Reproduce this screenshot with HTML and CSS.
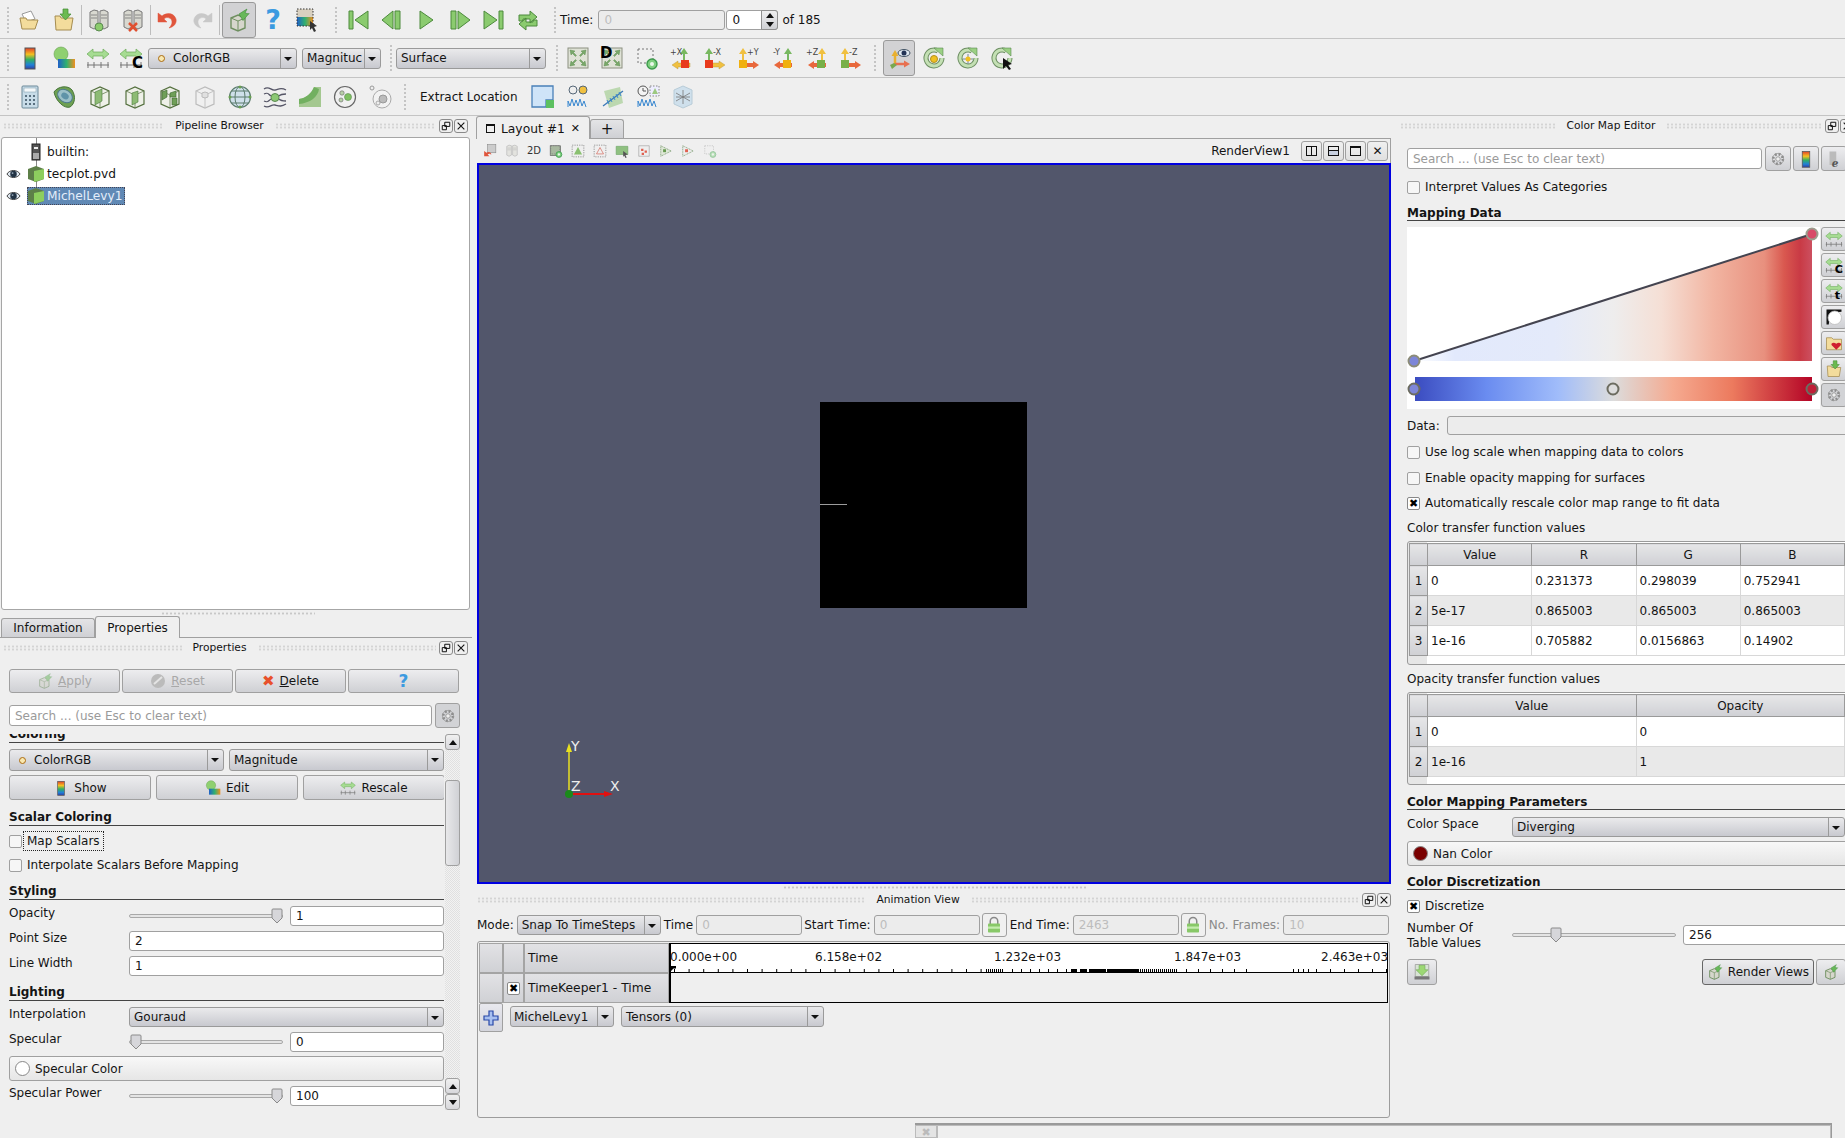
FILE: index.html
```html
<!DOCTYPE html>
<html lang="en">
<head>
    <meta charset="UTF-8">
    <title>ParaView</title>
    <link rel="stylesheet" href="styles.css">
</head>
<body>
<svg class="defs" width="0" height="0">
    <defs>
        <linearGradient id="rainbow" x1="0" y1="0" x2="0" y2="1">
            <stop offset="0" stop-color="#e0402a"/><stop offset=".3" stop-color="#f5c020"/><stop offset=".55" stop-color="#30b060"/><stop offset=".8" stop-color="#2080d8"/><stop offset="1" stop-color="#3040a0"/>
        </linearGradient>
        <linearGradient id="hrainbow" x1="0" y1="0" x2="1" y2="0">
            <stop offset="0" stop-color="#2060c8"/><stop offset=".5" stop-color="#30b070"/><stop offset="1" stop-color="#f09020"/>
        </linearGradient>
        <linearGradient id="opfill" x1="0" y1="0" x2="1" y2="0">
            <stop offset="0" stop-color="#e0e8fc" stop-opacity="0"/><stop offset=".1" stop-color="#e2e9fc"/><stop offset=".35" stop-color="#e4eafa"/><stop offset=".5" stop-color="#eeeded"/><stop offset=".62" stop-color="#f5dfd5"/><stop offset=".75" stop-color="#f2b5a2"/><stop offset=".88" stop-color="#e8907e"/><stop offset=".93" stop-color="#d9584f"/><stop offset=".97" stop-color="#c93a45"/><stop offset="1" stop-color="#cc5060"/>
        </linearGradient>
        <linearGradient id="ctf" x1="0" y1="0" x2="1" y2="0">
            <stop offset="0" stop-color="#3b4cc0"/><stop offset=".18" stop-color="#6a8cf0"/><stop offset=".36" stop-color="#a0bcfa"/><stop offset=".5" stop-color="#dcdcdc"/><stop offset=".65" stop-color="#f5aa90"/><stop offset=".8" stop-color="#ec7a5e"/><stop offset="1" stop-color="#b40426"/>
        </linearGradient>
        <symbol id="folder" viewBox="0 0 24 24"><path d="M4 6l9-3 4 8-9 3z" fill="#fff" stroke="#999"/><path d="M2 10h6l1 2h11l-3 9H4z" fill="#f3dc9c" stroke="#a58c50"/></symbol>
        <symbol id="folder-in" viewBox="0 0 24 24"><path d="M3 8h5l1 2h12l-2 12H4z" fill="#f3dc9c" stroke="#a58c50"/><path d="M11 1h5v5h3l-5.500 6L8 6h3z" fill="#6cba50" stroke="#3f8a30" stroke-width=".7"/></symbol>
        <symbol id="server" viewBox="0 0 24 24"><path d="M3 4l4-2 4 1v16l-4 2-4-2zM13 3l4-1 4 2v15l-4 2-4-2z" fill="#d8d8d0" stroke="#777"/><path d="M4 7h6M4 10h6M14 7h6M14 10h6" stroke="#888"/></symbol>
        <symbol id="undo" viewBox="0 0 24 24"><path d="M2 5v9h9l-3-3c3-3 8-1 8 3 0 2-1 4-3 6 5-1 8-5 7-9-2-6-9-7-14-3z" fill="currentColor" stroke="currentColor" stroke-width=".5"/></symbol>
        <symbol id="render" viewBox="0 0 24 24"><path d="M4 10l7-3 7 3v10l-7 3-7-3z" fill="#d6d6cc" stroke="#6f8f60" stroke-width="1.400"/><path d="M4 10l7 3 7-3M11 13v10" stroke="#6f8f60" fill="none"/><path d="M12 6l8-5-2 4 4 1v-.5l-6 7z" fill="#68b85a" stroke="#3c8a38" stroke-width=".6"/></symbol>
        <symbol id="pick" viewBox="0 0 24 24"><rect x="2" y="1" width="16" height="8" fill="#d8d0c0"/><rect x="2" y="9" width="16" height="9" fill="url(#hrainbow)"/><rect x="2" y="1" width="16" height="17" fill="none" stroke="#333" stroke-dasharray="1.500 1.500"/><path d="M15 13l7 5-3 1 2 4-2 1-2-4-2 2z" fill="#333"/></symbol>
        <symbol id="first" viewBox="0 0 24 24"><path d="M3 3h4v18H3zM22 3v18L9 12z" fill="#8bcb6f" stroke="#4c8a3c"/></symbol>
        <symbol id="prev" viewBox="0 0 24 24"><path d="M15 3h5v18h-5zM13 3v18L2 12z" fill="#8bcb6f" stroke="#4c8a3c"/></symbol>
        <symbol id="play" viewBox="0 0 24 24"><path d="M6 3v18l13-9z" fill="#8bcb6f" stroke="#4c8a3c"/></symbol>
        <symbol id="next" viewBox="0 0 24 24"><path d="M3 3h5v18H3zM10 3v18l12-9z" fill="#8bcb6f" stroke="#4c8a3c"/></symbol>
        <symbol id="last" viewBox="0 0 24 24"><path d="M21 3h-4v18h4zM2 3v18l13-9z" fill="#8bcb6f" stroke="#4c8a3c"/></symbol>
        <symbol id="loop" viewBox="0 0 24 24"><path d="M3 13V7h11V3l7 6-7 6v-4H7v2zM21 12v6H10v4l-7-6 7-6v4h7v-2z" fill="#8bcb6f" stroke="#4c8a3c"/></symbol>
        <symbol id="legend" viewBox="0 0 24 24"><rect x="7" y="2" width="10" height="21" fill="url(#rainbow)" stroke="#555"/></symbol>
        <symbol id="edit" viewBox="0 0 24 24"><circle cx="9" cy="8" r="7" fill="#8fd070" stroke="#66a050" stroke-width=".6"/><rect x="6" y="13" width="17" height="9" fill="url(#hrainbow)"/></symbol>
        <symbol id="rescale" viewBox="0 0 24 24"><path d="M1 8l6-5v3h10V3l6 5-6 5v-3H7v3z" fill="#a6dc92" stroke="#6aaa58" stroke-width=".7"/><path d="M1 19h22M2 16v6M8 16v6M15 16v6M22 16v6" stroke="#777" fill="none"/></symbol>
        <symbol id="reset" viewBox="0 0 24 24"><rect x="2" y="2" width="20" height="20" fill="#dfe2d6" stroke="#8c9080"/><path d="M4 4l5 1-1.500 1.500 3 3-1 1-3-3L5 9zM20 4l-1 5-1.500-1.500-3 3-1-1 3-3L15 5zM4 20l1-5 1.500 1.500 3-3 1 1-3 3L9 19zM20 20l-5-1 1.500-1.500-3-3 1-1 3 3L19 15z" fill="#78a868" stroke="#57864a" stroke-width=".4"/></symbol>
        <symbol id="zoombox" viewBox="0 0 24 24"><path d="M3 3h15v14H3z" fill="none" stroke="#777" stroke-dasharray="2 2"/><circle cx="17" cy="18" r="5" fill="#7fd07f" stroke="#3c9a4c" stroke-width="1.400"/><circle cx="17" cy="18" r="2" fill="#eaf8ea"/></symbol>
        <symbol id="rotate" viewBox="0 0 24 24"><path d="M20 12a8 8 0 1 1-4-7" fill="none" stroke="#6e8f64" stroke-width="5"/><path d="M20 12a8 8 0 1 1-4-7" fill="none" stroke="#c4e0b4" stroke-width="3"/><path d="M12 2h9v8z" fill="#9bd084" stroke="#5a8a50" stroke-width=".6"/></symbol>
        <symbol id="calc" viewBox="0 0 24 24"><rect x="4" y="1" width="16" height="22" rx="1" fill="#c8dce8" stroke="#6a8898"/><rect x="6" y="3" width="12" height="4" fill="#f4f8fa" stroke="#7a98a8" stroke-width=".5"/><path d="M7 10h2v2H7zM11 10h2v2h-2zM15 10h2v2h-2zM7 14h2v2H7zM11 14h2v2h-2zM15 14h2v2h-2zM7 18h2v2H7zM11 18h2v2h-2zM15 18h2v2h-2z" fill="#5a7080"/></symbol>
        <symbol id="contour" viewBox="0 0 24 24"><path d="M1 7c4-6 14-7 18-2 4 6 3 14-2 17C12 24 3 17 1 7z" fill="#6ea052" stroke="#48763c"/><ellipse cx="12" cy="11" rx="8" ry="6" transform="rotate(35 12 11)" fill="#9cc0c8" stroke="#4e7c8c"/><ellipse cx="12" cy="11" rx="4" ry="3" transform="rotate(35 12 11)" fill="#5f93a8"/></symbol>
        <symbol id="cube" viewBox="0 0 24 24"><path d="M3 6l9-4 9 4v13l-9 4-9-4z" fill="#eef0e8" stroke="#54703e" stroke-width="1.200"/><path d="M3 6l9 4 9-4M12 10v13" fill="none" stroke="#54703e" stroke-width=".7"/></symbol>
        <symbol id="clip" viewBox="0 0 24 24"><use href="#cube"/><path d="M7 7l7-3v12l-7 4z" fill="#8dbb74" stroke="#4a7a3c" stroke-width=".6"/></symbol>
        <symbol id="slice" viewBox="0 0 24 24"><use href="#cube"/><path d="M9 8l6-2v11l-6 3z" fill="#8dbb74" stroke="#4a7a3c" stroke-width=".6"/></symbol>
        <symbol id="thresh" viewBox="0 0 24 24"><use href="#cube"/><path d="M4 7l5-2v7l-5 3zM12 8l6-2v6h-6zM14 13h5v7h-5z" fill="#6f9f58" stroke="#3d6630" stroke-width=".6"/></symbol>
        <symbol id="extract" viewBox="0 0 24 24"><path d="M3 6l9-4 9 4v13l-9 4-9-4z" fill="#f0f0f0" stroke="#bcbcbc" stroke-width="1.200"/><path d="M3 6l9 4 9-4M12 10v13" fill="none" stroke="#c4c4c4"/><path d="M9 8l3-1 3 1v4l-3 1-3-1z" fill="#e0e0e0" stroke="#bbb"/></symbol>
        <symbol id="glyph" viewBox="0 0 24 24"><circle cx="12" cy="12" r="10.500" fill="#cfe0ea" stroke="#5a7a6c" stroke-width="1.200"/><ellipse cx="12" cy="12" rx="5" ry="10.500" fill="none" stroke="#5a7a6c"/><path d="M2 12h20M4 6h16M4 18h16" stroke="#5a7a6c" fill="none"/><circle cx="12" cy="2" r="1.500" fill="#6aa050"/><circle cx="2" cy="12" r="1.500" fill="#6aa050"/><circle cx="22" cy="12" r="1.500" fill="#6aa050"/><circle cx="12" cy="22" r="1.500" fill="#6aa050"/></symbol>
        <symbol id="stream" viewBox="0 0 24 24"><path d="M1 4c5-4 7 2 11 1s6-3 11 0M1 21c5 3 7-2 11-1s6 2 11-1M1 9c4-2 4 0 7 2M16 11c2-2 4-2 7-2M1 16c4 2 4 0 7-2M16 14c2 2 4 2 7 2" fill="none" stroke="#556" stroke-width="1.300"/><circle cx="12" cy="12.500" r="4" fill="#8cc874" stroke="#5a8a50"/></symbol>
        <symbol id="warp" viewBox="0 0 24 24"><path d="M1 14c7-1 12-5 15-12h7v20H1z" fill="#a4c890"/><path d="M1 14c7-1 12-5 15-12l5 2c-1 8-9 14-20 15z" fill="#72b060"/></symbol>
        <symbol id="group" viewBox="0 0 24 24"><circle cx="12" cy="12" r="10.500" fill="#f0f0f0" stroke="#666" stroke-width="1.200"/><circle cx="9" cy="8" r="2.200" fill="#b8d0a8" stroke="#666" stroke-width=".6"/><circle cx="8" cy="15" r="2" fill="#b8d0a8" stroke="#666" stroke-width=".6"/><circle cx="15" cy="12" r="3.500" fill="#7ec060" stroke="#5a8a50" stroke-width=".6"/></symbol>
        <symbol id="ungroup" viewBox="0 0 24 24"><circle cx="14" cy="14" r="9" fill="#f2f2f2" stroke="#aaa"/><circle cx="4" cy="3" r="2" fill="#eee" stroke="#999"/><circle cx="10" cy="18" r="2" fill="#eee" stroke="#aaa"/><circle cx="15" cy="14" r="4" fill="#bbb" stroke="#999"/></symbol>
        <symbol id="extloc" viewBox="0 0 24 24"><path d="M1 1h21v14h-7v7H1z" fill="#cfe4f8" stroke="#4a80b8" stroke-width="1.300"/><rect x="15" y="15" width="8" height="8" fill="#5cc060"/></symbol>
        <symbol id="plotsel" viewBox="0 0 24 24"><circle cx="7" cy="5" r="4" fill="#eee" stroke="#567"/><circle cx="17" cy="5" r="4" fill="#f0c040" stroke="#567"/><path d="M2 22v-6l2 5 2-7 2 7 2-6 2 6 2-7 2 7 2-5 2 6" fill="none" stroke="#3a88d0"/></symbol>
        <symbol id="plotline" viewBox="0 0 24 24"><path d="M3 6l16-4 3 16-14 5z" fill="#bcd8b0"/><path d="M2 21l20-15" stroke="#3a78b8" stroke-width="1.300"/><path d="M6 15l2 4M9 13l2 4M12 11l2 4M15 9l2 4M18 7l2 4" stroke="#3a88d0"/></symbol>
        <symbol id="plottime" viewBox="0 0 24 24"><circle cx="7" cy="6" r="5" fill="#f4f4f4" stroke="#555"/><path d="M7 3v3h3" fill="none" stroke="#555"/><path d="M14 1h9v10h-9z" fill="#eef" stroke="#888" stroke-dasharray="1.500 1.500"/><path d="M19 3l3 6h-6z" fill="#9cc880"/><path d="M2 22v-6l2 5 2-7 2 7 2-6 2 6 2-7 2 7 2-5 2 6" fill="none" stroke="#3a88d0"/></symbol>
        <symbol id="icecube" viewBox="0 0 24 24"><path d="M3 5l9-4 9 4v14l-9 4-9-4z" fill="#cfe0ec" stroke="#b8ccd8"/><path d="M5 8l14 8M19 8L5 16M12 5v14M5 12h14" stroke="#777" stroke-width=".8"/></symbol>
        <symbol id="gear" viewBox="0 0 24 24"><circle cx="12" cy="12" r="6.500" fill="none" stroke="#8a8a8a" stroke-width="3.500" stroke-dasharray="2.600 2.500"/><circle cx="12" cy="12" r="7.500" fill="none" stroke="#999"/><circle cx="12" cy="12" r="3" fill="#eee" stroke="#888"/></symbol>
        <symbol id="eye" viewBox="0 0 16 10"><path d="M1 5c3-5 11-5 14 0-3 5-11 5-14 0z" fill="#dfe8f0" stroke="#333"/><circle cx="8" cy="5" r="3.500" fill="#234"/><circle cx="7" cy="4" r="1" fill="#9ab"/></symbol>
        <symbol id="greencube" viewBox="0 0 18 18"><path d="M1 4l8-3 8 3v10l-8 3-8-3z" fill="#5d7f48"/><path d="M7 6l10-2v10l-10 3z" fill="#8dce5e"/></symbol>
        <symbol id="handle" viewBox="0 0 12 16"><path d="M1 2q0-1 1-1h8q1 0 1 1v8l-5 5-5-5z" fill="#d6d6da" stroke="#8a8a8a"/></symbol>
        <symbol id="lock" viewBox="0 0 24 24"><path d="M7 11V7a5 5 0 0 1 10 0v4" fill="none" stroke="#888" stroke-width="2"/><rect x="4" y="10" width="16" height="12" rx="1" fill="#88c868"/><rect x="4" y="14" width="16" height="3" fill="#c4ecae"/></symbol>
        <symbol id="save" viewBox="0 0 24 24"><path d="M3 2h18v16H3z" fill="#d8e4d4" stroke="#999"/><path d="M8 3h8v6h4l-8 8-8-8h4z" fill="#9cd874" stroke="#6aa050" stroke-width=".7"/><rect x="2" y="18" width="20" height="4" fill="#777"/></symbol>
        <symbol id="t-float" viewBox="0 0 12 12"><path d="M4.500 1.500h6v5h-6zM1.500 5.500h5v5h-5z" fill="#efefef" stroke="#111" stroke-width="1.200"/></symbol>
        <symbol id="t-close" viewBox="0 0 12 12"><path d="M2 2l8 8M10 2l-8 8" stroke="#111" stroke-width="1.300"/></symbol>
    </defs>
</svg>

<div class="toolbar row-a">
    <i class="grip-v"></i>
    <span class="tb"><svg class="ico"><use href="#folder"/></svg></span>
    <span class="tb"><svg class="ico"><use href="#folder-in"/></svg></span>
    <i class="vsep"></i>
    <span class="tb"><svg class="ico" viewBox="0 0 24 24"><use href="#server"/><circle cx="12" cy="19" r="4" fill="#8ccc6c" stroke="#5a8a50"/></svg></span>
    <span class="tb"><svg class="ico" viewBox="0 0 24 24"><use href="#server"/><path d="M8 15l8 8M16 15l-8 8" stroke="#e05030" stroke-width="2.500"/></svg></span>
    <i class="vsep"></i>
    <span class="tb red"><svg class="ico"><use href="#undo"/></svg></span>
    <span class="tb grey"><svg class="ico flip"><use href="#undo"/></svg></span>
    <i class="vsep"></i>
    <span class="tb active ml2"><svg class="ico"><use href="#render"/></svg></span>
    <span class="tb"><span class="qmark">?</span></span>
    <span class="tb"><svg class="ico"><use href="#pick"/></svg></span>
    <i class="grip-v g1"></i>
    <span class="tb"><svg class="ico"><use href="#first"/></svg></span>
    <span class="tb"><svg class="ico"><use href="#prev"/></svg></span>
    <span class="tb"><svg class="ico"><use href="#play"/></svg></span>
    <span class="tb"><svg class="ico"><use href="#next"/></svg></span>
    <span class="tb"><svg class="ico"><use href="#last"/></svg></span>
    <span class="tb"><svg class="ico"><use href="#loop"/></svg></span>
    <i class="grip-v g2"></i>
    <span class="tb-label">Time:</span>
    <span class="input disabled time-input">0</span>
    <span class="input spin-input">0<i class="spin"><b class="up"></b><b class="down"></b></i></span>
    <span class="tb-label of">of 185</span>
</div>

<div class="toolbar row-b">
    <i class="grip-v"></i>
    <span class="tb"><svg class="ico"><use href="#legend"/></svg></span>
    <span class="tb"><svg class="ico"><use href="#edit"/></svg></span>
    <span class="tb"><svg class="ico"><use href="#rescale"/></svg></span>
    <span class="tb tb-n"><svg class="ico" viewBox="0 0 24 24"><use href="#rescale"/><text x="13" y="22" class="ico-letter">C</text></svg></span>
    <span class="combo c-array"><span class="combo-txt"><i class="dot"></i>ColorRGB</span><i class="arrow"></i></span>
    <span class="combo c-comp"><span class="combo-txt">Magnituc</span><i class="arrow"></i></span>
    <i class="grip-v g3"></i>
    <span class="combo c-repr"><span class="combo-txt">Surface</span><i class="arrow"></i></span>
    <i class="grip-v g4"></i>
    <span class="tb ml2"><svg class="ico"><use href="#reset"/></svg></span>
    <span class="tb"><svg class="ico" viewBox="0 0 24 24"><use href="#reset"/><text x="0" y="12" class="ico-letter">D</text></svg></span>
    <span class="tb ml1"><svg class="ico"><use href="#zoombox"/></svg></span>
    <span class="tb"><svg class="ico" viewBox="0 0 24 24"><path d="M15 2l4 6h-3v8h-2V8h-3z" fill="#78b860"/><path d="M21 17H9v-2l-6 4 6 4v-2h12z" fill="#f0c040" stroke="#b09030" stroke-width=".4"/><rect x="12" y="14" width="8" height="8" fill="#e83a1c"/><text x="1" y="9" class="ico-axis">+X</text></svg></span>
    <span class="tb"><svg class="ico" viewBox="0 0 24 24"><path d="M6 2l4 6H7v8H5V8H2z" fill="#78b860"/><path d="M4 17h12v-2l6 4-6 4v-2H4z" fill="#f0c040" stroke="#b09030" stroke-width=".4"/><rect x="2" y="14" width="8" height="8" fill="#e83a1c"/><text x="10" y="9" class="ico-axis">-X</text></svg></span>
    <span class="tb"><svg class="ico" viewBox="0 0 24 24"><path d="M6 2l4 6H7v8H5V8H2z" fill="#f0c040"/><path d="M4 17h12v-2l6 4-6 4v-2H4z" fill="#e8683c"/><rect x="2" y="14" width="8" height="8" fill="#f0b010"/><text x="10" y="9" class="ico-axis">+Y</text></svg></span>
    <span class="tb"><svg class="ico" viewBox="0 0 24 24"><path d="M17 2l4 6h-3v8h-2V8h-3z" fill="#78b860"/><path d="M21 17H9v-2l-6 4 6 4v-2h12z" fill="#e8683c"/><rect x="12" y="14" width="8" height="8" fill="#f0b010"/><text x="2" y="9" class="ico-axis">-Y</text></svg></span>
    <span class="tb"><svg class="ico" viewBox="0 0 24 24"><path d="M17 2l4 6h-3v8h-2V8h-3z" fill="#f0c040"/><path d="M21 17H9v-2l-6 4 6 4v-2h12z" fill="#e8683c"/><rect x="12" y="14" width="8" height="8" fill="#78b048"/><text x="1" y="9" class="ico-axis">+Z</text></svg></span>
    <span class="tb"><svg class="ico" viewBox="0 0 24 24"><path d="M6 2l4 6H7v8H5V8H2z" fill="#f0c040"/><path d="M4 17h12v-2l6 4-6 4v-2H4z" fill="#e8683c"/><rect x="2" y="14" width="8" height="8" fill="#78b048"/><text x="10" y="9" class="ico-axis">-Z</text></svg></span>
    <i class="grip-v g5"></i>
    <span class="tb active narrow"><svg class="ico" viewBox="0 0 24 24"><path d="M8 19V9" stroke="#e8b030" stroke-width="2.500"/><path d="M8 4l3.500 6h-7z" fill="#e8b030"/><path d="M8 18h10" stroke="#e87050" stroke-width="2.500"/><path d="M23 18l-6 3.500v-7z" fill="#e87050"/><path d="M3 19l4-2 3 2-5 4z" fill="#78a850"/><ellipse cx="17" cy="7" rx="6" ry="3.500" fill="#dfe8f0" stroke="#456"/><circle cx="17" cy="7" r="2.500" fill="#235"/></svg></span>
    <span class="tb ml1"><svg class="ico" viewBox="0 0 24 24"><use href="#rotate"/><circle cx="12" cy="13" r="3.500" fill="#f0c020" stroke="#b09020"/></svg></span>
    <span class="tb"><svg class="ico" viewBox="0 0 24 24"><use href="#rotate"/><path d="M12 8v10M7 13h10" stroke="#789"/><circle cx="12" cy="13" r="2.500" fill="#f0c020"/></svg></span>
    <span class="tb"><svg class="ico" viewBox="0 0 24 24"><use href="#rotate"/><path d="M13 12l9 6-4 1 3 4-2 1-3-4-3 3z" fill="#111"/></svg></span>
</div>

<div class="toolbar row-c">
    <i class="grip-v g6"></i>
    <span class="tb w35"><svg class="ico"><use href="#calc"/></svg></span>
    <span class="tb w35"><svg class="ico"><use href="#contour"/></svg></span>
    <span class="tb w35"><svg class="ico"><use href="#clip"/></svg></span>
    <span class="tb w35"><svg class="ico"><use href="#slice"/></svg></span>
    <span class="tb w35"><svg class="ico"><use href="#thresh"/></svg></span>
    <span class="tb w35"><svg class="ico"><use href="#extract"/></svg></span>
    <span class="tb w35"><svg class="ico"><use href="#glyph"/></svg></span>
    <span class="tb w35"><svg class="ico"><use href="#stream"/></svg></span>
    <span class="tb w35"><svg class="ico"><use href="#warp"/></svg></span>
    <span class="tb w35"><svg class="ico"><use href="#group"/></svg></span>
    <span class="tb w35"><svg class="ico"><use href="#ungroup"/></svg></span>
    <i class="grip-v g7"></i>
    <span class="tb-label extract-label">Extract Location</span>
    <span class="tb w35"><svg class="ico"><use href="#extloc"/></svg></span>
    <span class="tb w35"><svg class="ico"><use href="#plotsel"/></svg></span>
    <span class="tb w35"><svg class="ico"><use href="#plotline"/></svg></span>
    <span class="tb w35"><svg class="ico"><use href="#plottime"/></svg></span>
    <span class="tb w35"><svg class="ico"><use href="#icecube"/></svg></span>
</div>

<div class="main">
    <!-- left dock -->
    <div class="col-left">
        <div class="dock-title"><i class="grip-h"></i><span>Pipeline Browser</span><i class="grip-h"></i><i class="tbtn"><svg class="tbi"><use href="#t-float"/></svg></i><i class="tbtn"><svg class="tbi"><use href="#t-close"/></svg></i></div>
        <div class="tree">
            <div class="tree-line"></div>
            <div class="tree-row"><i class="eye-slot"></i><svg class="tree-ico" viewBox="0 0 18 18"><rect x="5" y="1" width="8" height="16" fill="#555" stroke="#222"/><rect x="7" y="4" width="4" height="2" fill="#eee"/><rect x="6" y="10" width="6" height="6" fill="#aaa"/></svg><span>builtin:</span></div>
            <div class="tree-row"><svg class="eye"><use href="#eye"/></svg><svg class="tree-ico"><use href="#greencube"/></svg><span>tecplot.pvd</span></div>
            <div class="tree-row"><svg class="eye"><use href="#eye"/></svg><span class="selected"><svg class="tree-ico"><use href="#greencube"/></svg><span>MichelLevy1</span></span></div>
        </div>
        <div class="split-h"><i></i></div>
        <div class="tabs">
            <span class="tab off">Information</span>
            <span class="tab on">Properties</span>
        </div>
        <div class="dock-title"><i class="grip-h"></i><span>Properties</span><i class="grip-h"></i><i class="tbtn"><svg class="tbi"><use href="#t-float"/></svg></i><i class="tbtn"><svg class="tbi"><use href="#t-close"/></svg></i></div>
        <div class="props">
            <div class="btn-row">
                <span class="btn dis"><svg class="ico16 fade"><use href="#render"/></svg><span><u>A</u>pply</span></span>
                <span class="btn dis"><svg class="ico16" viewBox="0 0 16 16"><circle cx="8" cy="8" r="7" fill="#bbb"/><path d="M4 11l8-7" stroke="#e4e4e4" stroke-width="2"/></svg><span><u>R</u>eset</span></span>
                <span class="btn"><span class="del-x">✖</span><span><u>D</u>elete</span></span>
                <span class="btn"><span class="qmark small">?</span></span>
            </div>
            <div class="search-row">
                <span class="input search">Search ... (use Esc to clear text)</span>
                <span class="btn gear-btn pressed"><svg class="ico18"><use href="#gear"/></svg></span>
            </div>
            <div class="scroll-wrap">
                <div class="scroll-content">
                    <div class="heading clip-first">Coloring</div>
                    <div class="frow r-combos">
                        <span class="combo grow"><span class="combo-txt"><i class="dot"></i>ColorRGB</span><i class="arrow"></i></span>
                        <span class="combo grow2"><span class="combo-txt">Magnitude</span><i class="arrow"></i></span>
                    </div>
                    <div class="frow r-btns">
                        <span class="btn big"><svg class="ico16"><use href="#legend"/></svg>Show</span>
                        <span class="btn big"><svg class="ico16"><use href="#edit"/></svg>Edit</span>
                        <span class="btn big"><svg class="ico16"><use href="#rescale"/></svg>Rescale</span>
                    </div>
                    <div class="heading h-scalar">Scalar Coloring</div>
                    <label class="check c-map"><i class="cb"></i><span class="focus">Map Scalars</span></label>
                    <label class="check c-interp"><i class="cb"></i><span>Interpolate Scalars Before Mapping</span></label>
                    <div class="heading h-styling">Styling</div>
                    <div class="prop p-first"><span class="plabel">Opacity</span><span class="slider"><svg class="hdl end"><use href="#handle"/></svg></span><span class="input val">1</span></div>
                    <div class="prop"><span class="plabel">Point Size</span><span class="input wide">2</span></div>
                    <div class="prop"><span class="plabel">Line Width</span><span class="input wide">1</span></div>
                    <div class="heading h-light">Lighting</div>
                    <div class="prop p-first"><span class="plabel">Interpolation</span><span class="combo wide"><span class="combo-txt">Gouraud</span><i class="arrow"></i></span></div>
                    <div class="prop"><span class="plabel">Specular</span><span class="slider"><svg class="hdl start"><use href="#handle"/></svg></span><span class="input val">0</span></div>
                    <div class="colorbtn spec"><i class="swatch white"></i>Specular Color</div>
                    <div class="prop p-power"><span class="plabel">Specular Power</span><span class="slider"><svg class="hdl end"><use href="#handle"/></svg></span><span class="input val">100</span></div>
                </div>
                <div class="scrollbar">
                    <i class="sb-btn"><b class="up"></b></i>
                    <i class="sb-thumb"></i>
                    <i class="sb-rest"></i>
                    <i class="sb-btn"><b class="up"></b></i>
                    <i class="sb-btn"><b class="down"></b></i>
                </div>
            </div>
        </div>
    </div>

    <!-- centre -->
    <div class="col-center">
        <div class="view-tabs">
            <span class="vtab on"><i class="win-ico"></i>Layout #1<em>✕</em></span>
            <span class="vtab plus">+</span>
        </div>
        <div class="view-bar">
            <svg class="ico14 red" viewBox="0 0 24 24"><rect x="8" y="1" width="14" height="14" fill="#ccc" stroke="#888"/><path d="M2 12v9h9l-3-3c2-2 5-1 6 1 1-4-4-7-8-4z" fill="currentColor"/></svg>
            <svg class="ico14 fade" viewBox="0 0 24 24"><use href="#server"/></svg>
            <span class="two-d">2D</span>
            <svg class="ico14" viewBox="0 0 24 24"><rect x="2" y="3" width="18" height="17" fill="#a8b8a0" stroke="#555"/><use href="#zoombox"/></svg>
            <svg class="ico14" viewBox="0 0 24 24"><path d="M2 2h20v20H2z" fill="none" stroke="#555" stroke-dasharray="2 2"/><path d="M12 5l7 13H5z" fill="#8ac070"/></svg>
            <svg class="ico14" viewBox="0 0 24 24"><path d="M2 2h20v20H2z" fill="none" stroke="#555" stroke-dasharray="2 2"/><path d="M12 6l6 11H6z" fill="none" stroke="#d05040"/></svg>
            <svg class="ico14" viewBox="0 0 24 24"><path d="M2 4h20v14H2z" fill="#8fc080" stroke="#68a060"/><path d="M14 12l8 6-4 1 2 4-2 1-2-4-2 2z" fill="#555"/></svg>
            <svg class="ico14" viewBox="0 0 24 24"><path d="M3 3h18v18H3z" fill="#eee" stroke="#999"/><path d="M7 8h4v4H7zM13 11h4v4h-4zM8 15h4v4H8z" fill="#e06050"/></svg>
            <svg class="ico14" viewBox="0 0 24 24"><path d="M3 3l18 9-18 9z" fill="#dfe8d8" stroke="#578048" stroke-dasharray="2 1"/><path d="M7 9h5v5H7z" fill="#679a50"/></svg>
            <svg class="ico14" viewBox="0 0 24 24"><path d="M3 3l18 9-18 9z" fill="#eee" stroke="#578048" stroke-dasharray="2 1"/><path d="M7 9h5v5H7z" fill="#e06050"/></svg>
            <svg class="ico14 fade" viewBox="0 0 24 24"><use href="#zoombox"/></svg>
            <span class="view-name">RenderView1</span>
            <span class="vbtn"><i class="vb-cols"></i></span>
            <span class="vbtn"><i class="vb-rows"></i></span>
            <span class="vbtn"><i class="vb-max"></i></span>
            <span class="vbtn">✕</span>
        </div>
        <div class="viewport">
            <div class="black-square"><i></i></div>
            <svg class="axes" width="70" height="70" viewBox="0 0 70 70">
                <path d="M8 53V9" stroke="#e8e020" stroke-width="1.500"/><path d="M8 2l3 9H5z" fill="#e8e020"/>
                <path d="M8 53h36" stroke="#e01010" stroke-width="2"/><path d="M52 53l-9 3v-6z" fill="#e01010"/>
                <circle cx="8" cy="53" r="4" fill="#1a8a1a"/>
                <text x="10" y="10" class="axis-txt">Y</text>
                <text x="10" y="50" class="axis-txt">Z</text>
                <text x="49" y="50" class="axis-txt">X</text>
            </svg>
        </div>
        <div class="split-h s2"><i></i></div>
        <div class="dock-title dt3"><i class="grip-h"></i><span>Animation View</span><i class="grip-h"></i><i class="tbtn"><svg class="tbi"><use href="#t-float"/></svg></i><i class="tbtn"><svg class="tbi"><use href="#t-close"/></svg></i></div>
        <div class="mode-row">
            <span>Mode:</span>
            <span class="combo c-mode"><span class="combo-txt">Snap To TimeSteps</span><i class="arrow"></i></span>
            <span>Time</span>
            <span class="input disabled a-in a-first">0</span>
            <span>Start Time:</span>
            <span class="input disabled a-in">0</span>
            <span class="lock-btn"><svg class="ico18"><use href="#lock"/></svg></span>
            <span>End Time:</span>
            <span class="input disabled a-in">2463</span>
            <span class="lock-btn"><svg class="ico18"><use href="#lock"/></svg></span>
            <span class="muted">No. Frames:</span>
            <span class="input disabled a-in">10</span>
        </div>
        <div class="anim-frame">
            <div class="anim-grid">
                <span class="acell"></span><span class="acell"></span><span class="acell txt">Time</span>
                <div class="ruler">
                    <div class="ruler-labels"><span>0.000e+00</span><span>6.158e+02</span><span>1.232e+03</span><span>1.847e+03</span><span>2.463e+03</span></div>
                    <svg class="ticks" width="719" height="5" viewBox="0 0 719 5">
                        <path d="M0 0h5v2.500H2.500L0 5z" fill="#000" transform="translate(0 -1)"/>
                        <line x1="3" x2="313" y1="3.500" y2="3.500" stroke="#000" stroke-width="3" stroke-dasharray="1 13.600"/>
                        <line x1="315" x2="332" y1="3.500" y2="3.500" stroke="#000" stroke-width="3" stroke-dasharray="1 1"/>
                        <line x1="341" x2="400" y1="3.500" y2="3.500" stroke="#000" stroke-width="3" stroke-dasharray="1 8"/>
                        <path d="M400 2h6v3h-6zM409 2h7v3h-7zM418 2h17v3h-17zM436 2h31v3h-31z" fill="#000"/>
                        <line x1="467" x2="506" y1="3.500" y2="3.500" stroke="#000" stroke-width="3" stroke-dasharray="1 1"/>
                        <line x1="515" x2="585" y1="3.500" y2="3.500" stroke="#000" stroke-width="3" stroke-dasharray="1 11"/>
                        <line x1="622" x2="640" y1="3.500" y2="3.500" stroke="#000" stroke-width="3" stroke-dasharray="1 4"/>
                        <line x1="645" x2="719" y1="3.500" y2="3.500" stroke="#000" stroke-width="3" stroke-dasharray="1 13"/>
                    </svg>
                </div>
                <span class="acell"></span><span class="acell cbcell"><i class="cb on">✖</i></span><span class="acell txt">TimeKeeper1 - Time</span>
                <div class="track"></div>
            </div>
            <div class="add-row">
                <span class="plus-btn"><svg class="ico16" viewBox="0 0 16 16"><path d="M6 1h4v5h5v4h-5v5H6v-5H1V6h5z" fill="#a8c0f0" stroke="#2848a8" stroke-width="1.200"/></svg></span>
                <span class="combo c-src"><span class="combo-txt">MichelLevy1</span><i class="arrow"></i></span>
                <span class="combo c-arr"><span class="combo-txt">Tensors (0)</span><i class="arrow"></i></span>
            </div>
        </div>
    </div>

    <!-- right dock -->
    <div class="col-right">
        <div class="right-inner">
            <div class="dock-title dt4"><i class="grip-h"></i><span>Color Map Editor</span><i class="grip-h"></i><i class="tbtn"><svg class="tbi"><use href="#t-float"/></svg></i><i class="tbtn"><svg class="tbi"><use href="#t-close"/></svg></i></div>
            <div class="r-search">
                <span class="input search">Search ... (use Esc to clear text)</span>
                <span class="btn sq"><svg class="ico18"><use href="#gear"/></svg></span>
                <span class="btn sq"><svg class="ico18"><use href="#legend"/></svg></span>
                <span class="btn sq"><svg class="ico18" viewBox="0 0 24 24"><rect x="6" y="2" width="9" height="18" fill="#bbb"/><text x="9" y="22" class="ico-e">e</text></svg></span>
            </div>
            <label class="check r-interpret"><i class="cb"></i><span>Interpret Values As Categories</span></label>
            <div class="heading rh h-map">Mapping Data</div>
            <div class="tf-row">
                <svg class="tf" width="413" height="182" viewBox="0 0 413 182">
                    <rect width="413" height="182" fill="#fff"/>
                    <path d="M8 134L405 7v127z" fill="url(#opfill)"/>
                    <path d="M7 134L405 7" stroke="#444450" stroke-width="2" fill="none"/>
                    <circle cx="7" cy="134" r="5.500" fill="#7d86d8" stroke="#8c8c78" stroke-width="2"/>
                    <circle cx="405" cy="7" r="5.500" fill="#d84a68" stroke="#9c9c8c" stroke-width="2"/>
                    <rect x="8" y="150" width="397" height="24" fill="url(#ctf)"/>
                    <circle cx="7" cy="162" r="5.500" fill="#7d86d8" stroke="#6c6c60" stroke-width="2"/>
                    <circle cx="206" cy="162" r="5.500" fill="#ddd" stroke="#6c6c60" stroke-width="2"/>
                    <circle cx="405" cy="162" r="5.500" fill="#c02038" stroke="#6c6c60" stroke-width="2"/>
                </svg>
                <div class="tf-btns">
                    <span class="btn side"><svg class="ico18"><use href="#rescale"/></svg></span>
                    <span class="btn side"><svg class="ico18" viewBox="0 0 24 24"><use href="#rescale"/><text x="13" y="22" class="ico-letter">C</text></svg></span>
                    <span class="btn side"><svg class="ico18" viewBox="0 0 24 24"><use href="#rescale"/><text x="13" y="22" class="ico-letter">t</text></svg></span>
                    <span class="btn side"><svg class="ico18" viewBox="0 0 24 24"><path d="M2 2h20v3C12 5 6 10 5 22H2z" fill="#111"/><circle cx="13" cy="13" r="9" fill="#fff" stroke="#bbb"/></svg></span>
                    <span class="btn side"><svg class="ico18" viewBox="0 0 24 24"><path d="M2 5h7l2 2h11v14H2z" fill="#f3dc9c" stroke="#a58c50"/><path d="M15 21l-6-6c-2-3 3-5 6-2 3-3 8-1 6 2z" fill="#d02030"/></svg></span>
                    <span class="btn side"><svg class="ico18"><use href="#folder-in"/></svg></span>
                    <span class="btn side pressed"><svg class="ico18"><use href="#gear"/></svg></span>
                </div>
            </div>
            <div class="data-row"><span>Data:</span><span class="input disabled data-in"></span></div>
            <label class="check r-log"><i class="cb"></i><span>Use log scale when mapping data to colors</span></label>
            <label class="check r-op"><i class="cb"></i><span>Enable opacity mapping for surfaces</span></label>
            <label class="check r-auto"><i class="cb on">✖</i><span>Automatically rescale color map range to fit data</span></label>
            <div class="cap cap1">Color transfer function values</div>
            <div class="tbl-wrap">
                <table class="grid">
                    <colgroup><col class="c-h"><col class="c-q"><col class="c-q"><col class="c-q"><col class="c-q"></colgroup>
                    <tr><th></th><th>Value</th><th>R</th><th>G</th><th>B</th></tr>
                    <tr><th>1</th><td>0</td><td>0.231373</td><td>0.298039</td><td>0.752941</td></tr>
                    <tr class="alt"><th>2</th><td>5e-17</td><td>0.865003</td><td>0.865003</td><td>0.865003</td></tr>
                    <tr><th>3</th><td>1e-16</td><td>0.705882</td><td>0.0156863</td><td>0.14902</td></tr>
                </table>
            </div>
            <div class="cap cap2">Opacity transfer function values</div>
            <div class="tbl-wrap">
                <table class="grid">
                    <colgroup><col class="c-h"><col class="c-d"><col class="c-d"></colgroup>
                    <tr><th></th><th>Value</th><th>Opacity</th></tr>
                    <tr><th>1</th><td>0</td><td>0</td></tr>
                    <tr class="alt"><th>2</th><td>1e-16</td><td>1</td></tr>
                </table>
            </div>
            <div class="heading rh h-cmp">Color Mapping Parameters</div>
            <div class="r-prop r-space"><span class="rlabel up2">Color Space</span><span class="combo r-wide"><span class="combo-txt">Diverging</span><i class="arrow"></i></span></div>
            <div class="colorbtn nan"><i class="swatch dark"></i>Nan Color</div>
            <div class="heading rh h-disc">Color Discretization</div>
            <label class="check r-disc"><i class="cb on">✖</i><span>Discretize</span></label>
            <div class="r-prop r-table"><span class="rlabel two">Number Of<br>Table Values</span><span class="slider s-table"><svg class="hdl quarter"><use href="#handle"/></svg></span><span class="input r-val">256</span></div>
            <div class="r-foot">
                <span class="btn save"><svg class="ico18"><use href="#save"/></svg></span>
                <span class="btn render"><svg class="ico16"><use href="#render"/></svg>Render Views</span>
                <span class="btn render2"><svg class="ico16"><use href="#render"/></svg></span>
            </div>
        </div>
    </div>
</div>

<div class="status">
    <span class="st-x">✖</span><span class="st-box"></span>
</div>
</body>
</html>
```

FILE: styles.css
```css
* {
    box-sizing: border-box;
}
html, body {
    margin: 0;
    height: 100%;
}
body {
    width: 1845px;
    height: 1138px;
    overflow: hidden;
    background: #efefef;
    color: #141414;
    font-family: "DejaVu Sans", sans-serif;
    font-size: 12px;
    line-height: 16px;
}
i, em {
    font-style: normal;
}
u {
    text-decoration: underline;
}
.defs {
    position: absolute;
}

/* toolbars */
.toolbar {
    display: flex;
    align-items: center;
    height: 38px;
    border-bottom: 1px solid #c4c4c4;
    background: #efefef;
}
.row-a { height: 39px; padding-top: 1px; }
.row-b { height: 39px; }
.tb {
    display: flex;
    align-items: center;
    justify-content: center;
    flex: none;
    width: 34px;
    height: 33px;
}
.tb-n { width: 33px; margin-right: 1px; margin-left: -1px; }
.w35 { width: 35px; }
.ml1 { margin-left: 1px; }
.ml2 { margin-left: 2px; }
.red { color: #e0553c; }
.grey { color: #c8c8c8; }
.flip { transform: scaleX(-1); }
.ico { width: 24px; height: 24px; overflow: visible; }
.ico14 { width: 14px; height: 14px; flex: none; overflow: visible; }
.ico16 { width: 16px; height: 16px; flex: none; overflow: visible; }
.ico18 { width: 18px; height: 18px; flex: none; overflow: visible; }
.fade { opacity: .5; }
.active {
    background: #d2d2d4;
    border: 1px solid #9a9a9a;
    border-radius: 3px;
    height: 36px;
}
.narrow { width: 32px; margin-right: 1px; }
.grip-v {
    flex: none;
    width: 4px;
    height: 28px;
    margin: 0 3px 0 6px;
    background: radial-gradient(circle, #c4c4c4 1px, transparent 1.2px) 0 0 / 4px 4px;
}
.g1 { margin: 0 3px 0 10px; }
.g2 { margin: 0 3px 0 8px; }
.g3 { margin: 0 3px 0 8px; }
.g4 { margin: 0 0 0 9px; }
.g5 { margin: 0 6px 0 5px; }
.g6 { margin: 0 2px 0 6px; }
.g7 { margin: 0 13px 0 6px; }
.vsep {
    flex: none;
    width: 1px;
    height: 30px;
    background: #bdbdbd;
}
.tb-label { flex: none; }
.of { margin-left: 4px; }
.extract-label { margin-right: 8px; }
.ico-letter { font: bold 15px "DejaVu Sans", sans-serif; fill: #000; }
.ico-axis { font: 8px "DejaVu Sans", sans-serif; fill: #444; }
.ico-e { font: italic bold 14px "DejaVu Serif", serif; fill: #555; }
.qmark {
    color: #3b9ae0;
    font: bold 27px "DejaVu Sans", sans-serif;
    line-height: 30px;
}
.qmark.small { font-size: 17px; line-height: 20px; }

/* inputs and combos */
.input {
    display: flex;
    align-items: center;
    background: #fff;
    border: 1px solid #a0a0a0;
    border-radius: 3px;
    height: 20px;
    padding: 0 5px;
    flex: none;
}
.input.disabled {
    background: #ececec;
    color: #bdbdbd;
}
.time-input {
    width: 127px;
    margin-left: 5px;
}
.spin-input {
    position: relative;
    width: 52px;
    margin-left: 1px;
}
.spin {
    position: absolute;
    right: -1px;
    top: -1px;
    width: 17px;
    height: 20px;
    display: flex;
    flex-direction: column;
    border: 1px solid #909090;
    border-radius: 0 3px 3px 0;
    background: linear-gradient(#efeff0, #cfd0d4);
}
.spin b {
    flex: 1;
    display: block;
    position: relative;
}
.up::after, .down::after {
    content: "";
    position: absolute;
    left: 50%;
    top: 50%;
    margin: -2px 0 0 -4px;
    border: 4px solid transparent;
}
.up::after { border-bottom: 5px solid #111; border-top: 0; }
.down::after { border-top: 5px solid #111; border-bottom: 0; }
.combo {
    display: flex;
    align-items: center;
    flex: none;
    height: 21px;
    border: 1px solid #9a9a9a;
    border-radius: 3px;
    background: linear-gradient(#eaeaec, #c8c9cf);
    overflow: hidden;
}
.combo-txt {
    flex: 1;
    min-width: 0;
    padding-left: 4px;
    white-space: nowrap;
    overflow: hidden;
}
.arrow {
    position: relative;
    flex: none;
    width: 16px;
    height: 100%;
    border-left: 1px solid #9a9a9a;
}
.arrow::after {
    content: "";
    position: absolute;
    left: 3px;
    top: 8px;
    border: 4px solid transparent;
    border-top: 4px solid #111;
    border-bottom: 0;
}
.dot {
    display: inline-block;
    width: 7px;
    height: 7px;
    margin: 0 8px 0 5px;
    border: 1px solid #aa6a10;
    border-radius: 50%;
    background: #f8e8b0;
}
.c-array { width: 149px; }
.c-comp { width: 79px; margin-left: 5px; }
.c-repr { width: 150px; }

/* main columns */
.main {
    display: flex;
    height: 1007px;
}
.col-left {
    flex: none;
    width: 476px;
    position: relative;
}
.col-center {
    flex: none;
    width: 916px;
}
.col-right {
    flex: none;
    width: 453px;
    overflow: hidden;
}
.right-inner {
    width: 470px;
    padding-left: 15px;
}

/* dock titles */
.dock-title {
    display: flex;
    align-items: center;
    gap: 11px;
    height: 21px;
    padding: 0 8px 2px 3px;
    font-size: 10.700px;
}
.grip-h {
    flex: 1;
    height: 6px;
    background: radial-gradient(circle, #d4d4d4 1px, transparent 1.2px) 0 0 / 4px 3px;
}
.tbtn {
    flex: none;
    display: flex;
    align-items: center;
    justify-content: center;
    width: 14px;
    height: 14px;
    border: 1px solid #8a8a8a;
    border-radius: 3px;
}
.tbi {
    width: 10px;
    height: 10px;
}
.grip-h + .tbtn { margin-left: -8px; }
.tbtn + .tbtn { margin-left: -10px; }
.dt3 { height: 19px; padding: 0 1px 2px 1px; }
.dt4 { width: 454px; margin-left: -7px; padding: 0 0 2px 0; }

/* pipeline tree */
.tree {
    position: relative;
    height: 473px;
    margin: 0 6px 0 1px;
    padding-top: 3px;
    background: #fff;
    border: 1px solid #a6a6a6;
    border-radius: 3px;
    font-size: 12.200px;
}
.tree-line {
    position: absolute;
    left: 34px;
    top: 0;
    width: 1px;
    height: 52px;
    background: #888;
}
.tree-row {
    position: relative;
    display: flex;
    align-items: center;
    height: 22px;
    padding-left: 4px;
}
.eye-slot, .eye {
    flex: none;
    width: 15px;
    height: 10px;
    margin-right: 6px;
}
.tree-ico {
    flex: none;
    width: 18px;
    height: 18px;
    margin-right: 2px;
}
.selected {
    display: flex;
    align-items: center;
    height: 18px;
    padding-right: 0;
    width: 98px;
    background: #6089b5;
    color: #e4eefa;
    outline: 1px dotted #445;
    outline-offset: -1px;
}
.split-h {
    height: 7px;
    display: flex;
    justify-content: center;
}
.split-h i {
    width: 154px;
    margin-top: 2px;
    height: 3px;
    background: radial-gradient(circle, #c8c8c8 1px, transparent 1.2px) 0 0 / 4px 3px;
}
.s2 i { width: 303px; }

/* tabs */
.tabs {
    display: flex;
    align-items: flex-end;
    height: 21px;
    padding-left: 1px;
    border-bottom: 1px solid #a0a0a0;
    margin-right: 4px;
}
.tab {
    display: flex;
    align-items: center;
    justify-content: center;
    border: 1px solid #a0a0a0;
    border-radius: 3px 3px 0 0;
}
.tab.off {
    width: 94px;
    height: 19px;
    background: linear-gradient(#e4e4e6, #cfd0d4);
    border-bottom: 0;
}
.tab.on {
    width: 85px;
    height: 22px;
    margin-bottom: -1px;
    background: #efefef;
    border-bottom: 0;
}

/* properties */
.props {
    padding: 10px 0 0 9px;
}
.btn-row {
    display: flex;
    gap: 2px;
}
.btn {
    display: flex;
    align-items: center;
    justify-content: center;
    gap: 5px;
    border: 1px solid #a0a0a0;
    border-radius: 3px;
    background: linear-gradient(#ededef, #cfd0d4);
    flex: none;
}
.btn-row .btn {
    width: 111px;
    height: 24px;
}
.btn.dis {
    color: #a8a8a8;
}
.del-x {
    color: #e8502c;
    font-size: 15px;
}
.pressed {
    background: #d2d3d6;
}
.search-row {
    display: flex;
    gap: 3px;
    align-items: center;
    margin-top: 10px;
}
.search {
    color: #9a9a9a;
    width: 423px;
    height: 21px;
}
.gear-btn {
    width: 25px;
    height: 25px;
}
.scroll-wrap {
    display: flex;
    height: 376px;
    margin-top: 6px;
}
.scroll-content {
    width: 435px;
    overflow: hidden;
    flex: none;
}
.heading {
    height: 18px;
    border-bottom: 1px solid #444;
    font-weight: bold;
    line-height: 19px;
}
.rh { line-height: 21px; }
.clip-first {
    margin-top: -9px;
}
.frow {
    display: flex;
}
.r-combos {
    gap: 5px;
    margin-top: 6px;
}
.grow { width: 215px; height: 22px; }
.grow2 { width: 215px; height: 22px; }
.r-btns {
    gap: 5px;
    margin-top: 4px;
}
.big {
    width: 142px;
    height: 25px;
}
.h-scalar { margin-top: 8px; }
.check {
    display: flex;
    align-items: center;
    gap: 5px;
    height: 16px;
}
.cb {
    display: flex;
    align-items: center;
    justify-content: center;
    flex: none;
    width: 13px;
    height: 13px;
    border: 1px solid #a0a0a0;
    border-radius: 2px;
    background: #f6f6f6;
    font-size: 11px;
    line-height: 11px;
    color: #000;
}
.cb.on { background: #fff; border-color: #888; }
.focus {
    outline: 1px dotted #222;
    padding: 1px 3px;
    margin-left: -3px;
}
.c-map { margin-top: 7px; }
.c-interp { margin-top: 8px; }
.h-styling { margin-top: 9px; }
.prop {
    display: flex;
    align-items: center;
    height: 20px;
    margin-top: 5px;
}
.p-first { margin-top: 6px; }
.plabel {
    width: 120px;
    flex: none;
    align-self: flex-start;
    margin-top: -1px;
}
.slider {
    position: relative;
    flex: none;
    width: 154px;
    height: 4px;
    border: 1px solid #a8a8a8;
    border-radius: 2px;
    background: #e4e4e4;
    margin-right: 7px;
}
.hdl {
    position: absolute;
    top: -7px;
    width: 12px;
    height: 16px;
}
.hdl.end { right: -1px; }
.hdl.start { left: 0; }
.hdl.quarter { left: 37px; }
.val {
    width: 154px;
}
.input.wide, .combo.wide {
    width: 315px;
}
.combo.wide { height: 20px; }
.h-light { margin-top: 7px; }
.colorbtn {
    display: flex;
    align-items: center;
    gap: 5px;
    height: 25px;
    border: 1px solid #a0a0a0;
    border-radius: 3px;
    background: linear-gradient(#f8f8f8, #e6e6e6);
    padding-left: 5px;
}
.spec { margin-top: 4px; width: 435px; }
.swatch {
    width: 15px;
    height: 15px;
    border-radius: 50%;
    border: 1px solid #888;
}
.swatch.white { background: #fff; }
.swatch.dark { background: #7a0000; }
.p-power { margin-top: 5px; }
.scrollbar {
    flex: none;
    width: 15px;
    margin-left: 1px;
    display: flex;
    flex-direction: column;
    background: repeating-conic-gradient(#e0e0e0 0 25%, #f2f2f2 0 50%) 0 0 / 2px 2px;
}
.sb-btn {
    flex: none;
    position: relative;
    height: 16px;
    border: 1px solid #a0a0a0;
    border-radius: 3px;
    background: linear-gradient(#f0f0f0, #d8d8dc);
}
.sb-btn b { position: absolute; inset: 0; }
.sb-thumb {
    flex: none;
    margin-top: 30px;
    height: 86px;
    border: 1px solid #a0a0a0;
    border-radius: 3px;
    background: linear-gradient(90deg, #e8e8ea, #d0d1d5);
}
.sb-rest {
    flex: 1;
}

/* centre: view */
.view-tabs {
    display: flex;
    align-items: flex-end;
    height: 23px;
    padding-top: 1px;
    border-bottom: 1px solid #a0a0a0;
    margin-right: 1px;
}
.vtab {
    display: flex;
    align-items: center;
    justify-content: center;
    border: 1px solid #a0a0a0;
    border-radius: 3px 3px 0 0;
}
.vtab.on {
    gap: 6px;
    width: 114px;
    height: 23px;
    margin-bottom: -1px;
    padding-top: 1px;
    background: #efefef;
    border-bottom: 0;
    font-size: 12.300px;
}
.vtab em { font-size: 11px; }
.win-ico {
    width: 9px;
    height: 9px;
    border: 1px solid #111;
    border-top-width: 2px;
}
.vtab.plus {
    width: 34px;
    height: 19px;
    background: linear-gradient(#e4e4e6, #cfd0d4);
    border-bottom: 0;
    font-size: 15px;
}
.view-bar {
    display: flex;
    align-items: center;
    height: 24px;
    padding: 0 2px 0 7px;
    gap: 8px;
    border-right: 1px solid #a0a0a0;
    margin-right: 1px;
}
.two-d {
    font-size: 10px;
    width: 14px;
    text-align: center;
    color: #333;
}
.view-name {
    margin-left: auto;
    margin-right: 3px;
}
.vbtn {
    display: flex;
    align-items: center;
    justify-content: center;
    width: 21px;
    height: 20px;
    margin-left: -7px;
    border: 1px solid #a0a0a0;
    border-radius: 3px;
    background: linear-gradient(#f0f0f0, #e0e0e0);
    font-size: 12px;
}
.view-name + .vbtn { margin-left: 0; }
.vb-cols, .vb-rows, .vb-max {
    display: block;
    width: 11px;
    height: 10px;
    border: 1px solid #111;
}
.vb-cols { background: linear-gradient(90deg, transparent 4px, #111 4px, #111 5px, transparent 5px); }
.vb-rows { background: linear-gradient(transparent 3px, #111 3px, #111 4px, #c8d0e0 4px); }
.vb-max { border-top-width: 2px; }
.viewport {
    position: relative;
    height: 721px;
    background: #52566b;
    border: 2px solid #0000e0;
    margin: 0 0 0 1px;
    width: 914px;
}
.black-square {
    position: absolute;
    left: 341px;
    top: 237px;
    width: 207px;
    height: 206px;
    background: #000;
}
.black-square i {
    display: block;
    width: 27px;
    height: 1px;
    margin-top: 102px;
    position: absolute;
    background: #9c9c9c;
}
.axes {
    position: absolute;
    left: 82px;
    top: 576px;
    overflow: visible;
}
.axis-txt {
    font: 14px "DejaVu Sans", sans-serif;
    fill: #eee;
}
.col-center .split-h { height: 7px; }
.mode-row {
    display: flex;
    align-items: center;
    height: 24px;
    margin-top: 3px;
    padding-left: 1px;
    gap: 2px;
    white-space: nowrap;
}
.c-mode { width: 144px; height: 20px; margin: 0 1px; }
.a-in { width: 106px; margin-left: 1px; }
.a-first { margin-left: 1px; }
.muted { color: #8a8a8a; }
.lock-btn {
    display: flex;
    align-items: center;
    justify-content: center;
    width: 25px;
    height: 24px;
    margin-right: 1px;
    border: 1px solid #a0a0a0;
    border-radius: 3px;
    background: #f0f0f0;
    flex: none;
}
.anim-frame {
    width: 913px;
    height: 177px;
    margin: 4px 0 0 1px;
    padding: 1px;
    border: 1px solid #9c9c9c;
    border-radius: 3px;
}
.anim-grid {
    display: grid;
    grid-template-columns: 24px 21px 145px 719px;
    grid-template-rows: 30px 30px;
}
.acell {
    display: flex;
    align-items: center;
    border: 1px solid #a4a4a4;
    background: linear-gradient(#e2e2e5, #d0d1d5);
    font-size: 12.300px;
}
.acell.txt { padding-left: 3px; }
.cbcell { justify-content: center; }
.ruler {
    position: relative;
    background: #fff;
    border: 1px solid #000;
    border-width: 1px 1px 1px 2px;
}
.ruler-labels {
    display: grid;
    grid-template-columns: 144px 179px 180px 147px 66px;
    height: 24px;
    padding-top: 5px;
    white-space: nowrap;
}
.ruler-labels span:first-child { margin-left: -1px; }
.ticks {
    position: absolute;
    left: 0;
    bottom: 0;
    overflow: visible;
}
.track {
    background: #efefef;
    border: 1px solid #000;
    border-width: 0 1px 1px 2px;
}
.add-row {
    display: flex;
    align-items: flex-start;
    gap: 6px;
}
.plus-btn {
    display: flex;
    align-items: center;
    justify-content: center;
    width: 24px;
    height: 29px;
    margin-right: 1px;
    border: 1px solid #a0a0a0;
    border-radius: 2px;
    background: linear-gradient(#e8e8ee, #d4d5dc);
}
.c-src { width: 104px; height: 21px; margin-top: 3px; }
.c-src .combo-txt { padding-left: 3px; }
.c-arr { width: 203px; height: 21px; margin-top: 3px; margin-left: 1px; }

/* right dock */
.r-search {
    display: flex;
    align-items: center;
    gap: 2px;
    margin-top: 9px;
}
.r-search .search {
    width: 355px;
    margin-right: 1px;
}
.sq {
    width: 26px;
    height: 25px;
}
.r-interpret { margin-top: 8px; }
.h-map { margin-top: 8px; width: 451px; }
.tf-row {
    display: flex;
    gap: 1px;
    margin-top: 6px;
}
.tf { flex: none; display: block; overflow: hidden; }
.tf-btns {
    display: flex;
    flex-direction: column;
    gap: 2px;
}
.side {
    width: 26px;
    height: 24px;
}
.data-row {
    display: flex;
    align-items: center;
    gap: 7px;
    margin-top: 7px;
}
.data-in { width: 410px; height: 19px; }
.r-log { margin-top: 9px; }
.r-op { margin-top: 10px; }
.r-auto { margin-top: 9px; }
.cap { height: 15px; }
.cap1 { margin-top: 9px; }
.cap2 { margin-top: 6px; }
.tbl-wrap {
    width: 445px;
    height: 93px;
    margin-top: 6px;
    padding: 1px 0 0 1px;
    border: 1px solid #9a9a9a;
    border-radius: 3px;
    background: linear-gradient(90deg, #e6e6e6 19px, #fff 19px);
}
.tbl-wrap:has(tr:nth-child(4)) { height: 124px; }
.grid {
    table-layout: fixed;
    width: 436px;
    border-collapse: collapse;
    background: #fff;
    border-bottom: 1px solid #d0d0d0;
}
.c-h { width: 18px; }
.c-q { width: 104px; }
.c-d { width: 208px; }
.grid th, .grid td {
    padding: 0 3px;
    font-weight: normal;
    overflow: hidden;
    white-space: nowrap;
}
.grid tr { height: 30px; }
.grid tr:first-child { height: 22px; }
.grid th {
    text-align: center;
    border: 1px solid #9a9a9a;
    background: linear-gradient(#e6e6e8, #cfd0d4);
    padding: 0;
}
.grid td {
    border: 1px solid #d8d8d8;
}
.alt td { background: #e9e9e9; }
.h-cmp { margin-top: 7px; width: 451px; }
.r-prop {
    display: flex;
}
.rlabel {
    width: 105px;
    flex: none;
}
.up2 { margin-top: -1px; }
.r-space {
    align-items: flex-start;
    margin-top: 7px;
}
.r-wide { width: 333px; height: 20px; }
.nan {
    width: 451px;
    height: 25px;
    margin-top: 4px;
}
.h-disc { margin-top: 6px; width: 451px; }
.r-disc { margin-top: 8px; }
.r-table {
    align-items: center;
    margin-top: 5px;
}
.two { line-height: 15px; padding-top: 2px; }
.s-table { width: 164px; margin-right: 7px; }
.r-val { width: 180px; height: 20px; }
.r-foot {
    display: flex;
    align-items: center;
    margin-top: 8px;
    height: 26px;
}
.save { width: 30px; height: 26px; }
.render {
    width: 112px;
    height: 26px;
    margin-left: 265px;
    border-color: #666;
}
.render2 {
    width: 30px;
    height: 26px;
    margin-left: 2px;
}

/* bottom status */
.status {
    display: flex;
    height: 15px;
    width: 917px;
    margin-left: 915px;
    border-top: 2px solid #9a9a9a;
    border-right: 1px solid #9a9a9a;
}
.st-x {
    width: 22px;
    border: 1px solid #bbb;
    color: #bbb;
    text-align: center;
    font-size: 11px;
    line-height: 14px;
    background: #e4e4e4;
}
.st-box {
    flex: 1;
    border: 1px solid #bbb;
    border-bottom: 0;
}
```
